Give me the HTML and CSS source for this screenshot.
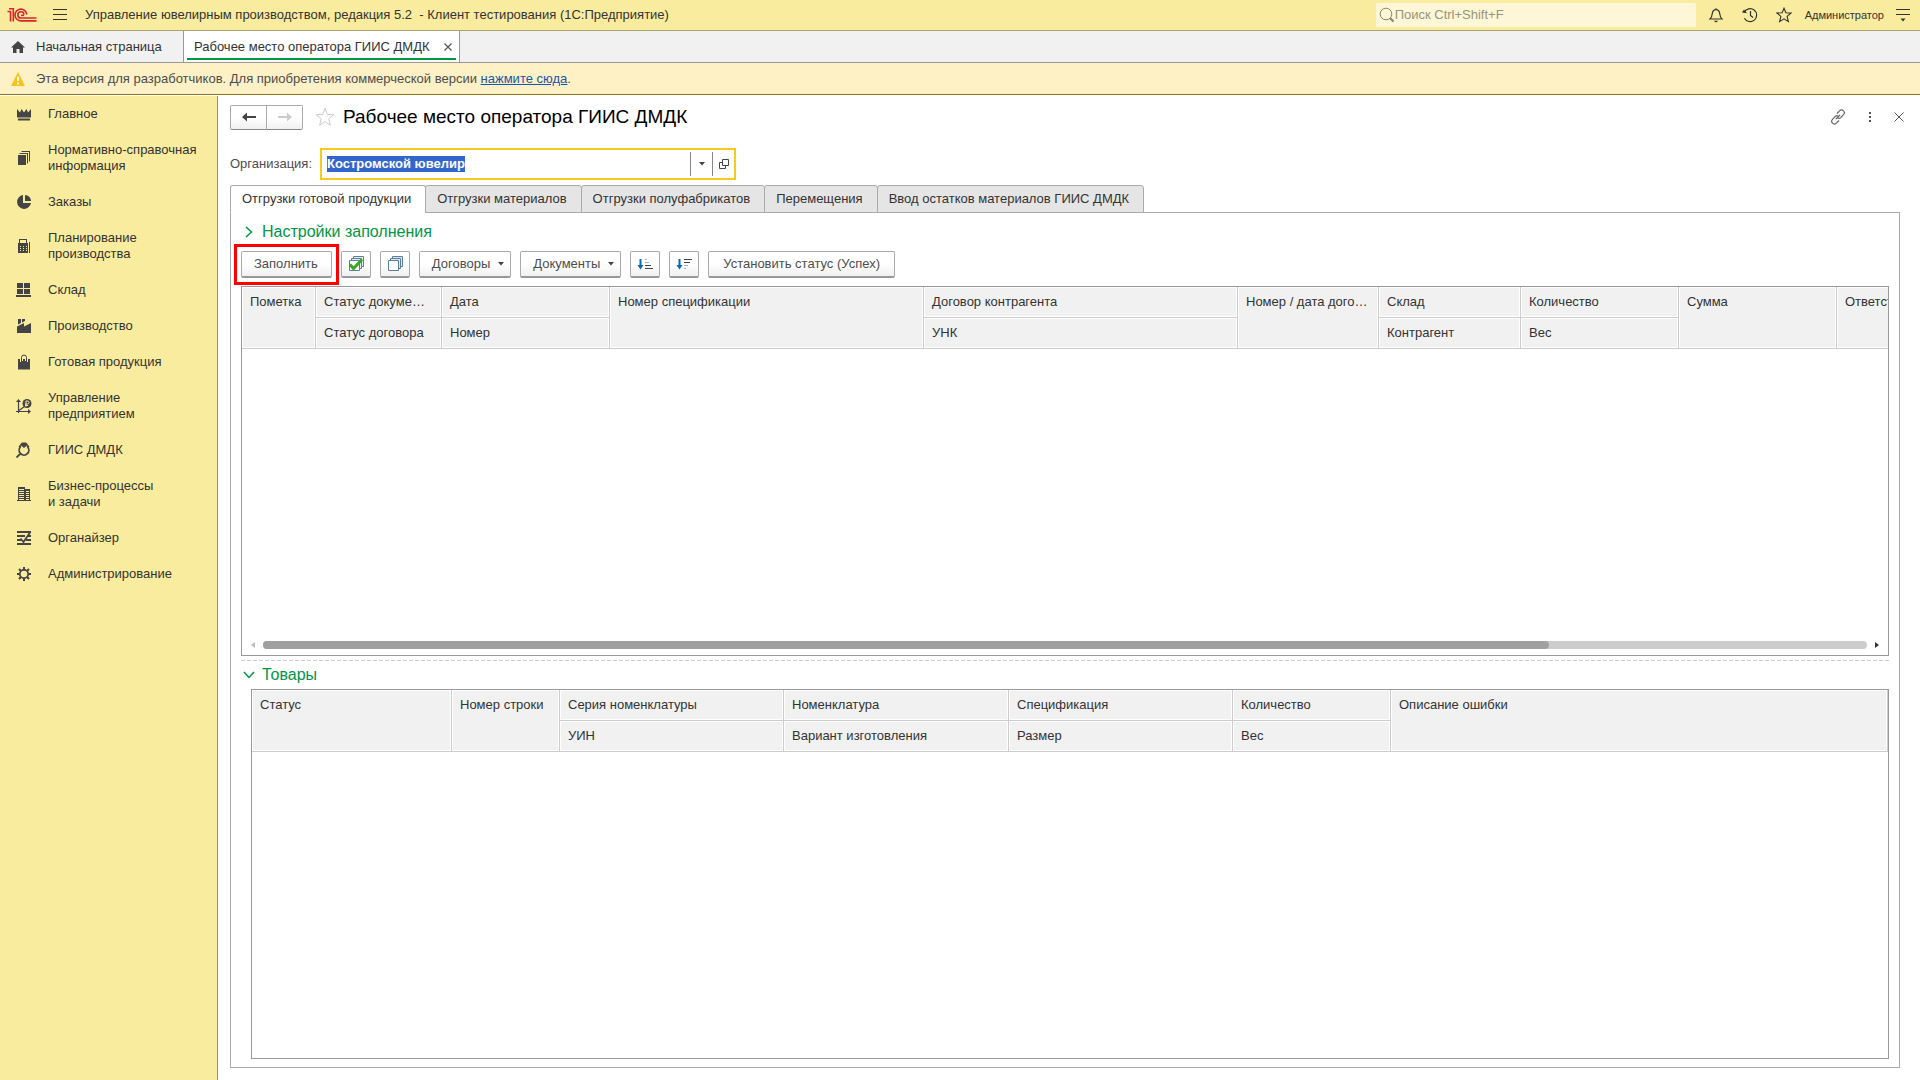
FILE: index.html
```html
<!DOCTYPE html>
<html lang="ru">
<head>
<meta charset="utf-8">
<title>Рабочее место оператора ГИИС ДМДК</title>
<link rel="stylesheet" href="styles.css">
</head>
<body>
<div class="app">
  <header class="topbar">
    <svg class="logo" width="30" height="16" viewBox="0 0 30 16" fill="none" stroke="#d9252b" stroke-width="1.6" aria-label="1С">
      <path d="M0.5 4.5h3v10M2 1.800h4.300v12.700"/>
      <path d="M19.800 7.500A5.900 5.900 0 1 0 14 13.900h15.500"/>
      <path d="M17 7.500A3.100 3.100 0 1 0 14 11h15.500"/>
      <path d="M14 8.300h3"/>
    </svg>
    <button class="icon-btn menu-btn" aria-label="Меню"><svg width="14" height="12" viewBox="0 0 14 12" stroke="#333" fill="none"><path d="M0 .5h14M0 5.500h14M0 10.500h14"/></svg></button>
    <span class="app-title">Управление ювелирным производством, редакция 5.2 &nbsp;- Клиент тестирования (1С:Предприятие)</span>
    <label class="search">
      <svg width="16" height="16" viewBox="0 0 16 16" fill="none" stroke="#8d886a"><circle cx="7" cy="7" r="5.800"/><path d="M11 11l3.500 3.500" stroke-width="2.200"/></svg>
      <input type="text" placeholder="Поиск Ctrl+Shift+F" aria-label="Поиск">
    </label>
    <button class="icon-btn" aria-label="Уведомления"><svg width="16" height="16" viewBox="0 0 16 16" fill="none" stroke="#333" stroke-width="1.200"><path d="M8 1.200v1.300M2 12h12c-1.600-1.600-2-3-2.200-5C11.500 4 10 2.600 8 2.600S4.500 4 4.200 7C4 9 3.600 10.400 2 12z"/><path d="M5.500 13.800h5L8 15.600z" fill="#333" stroke="none"/></svg></button>
    <button class="icon-btn" aria-label="История"><svg width="16" height="16" viewBox="0 0 16 16" fill="none" stroke="#333" stroke-width="1.200"><path d="M2.300 5.300A6.500 6.500 0 1 1 2.400 11.200M8.500 4v4.500l2.500 2"/><path d="M0 5.500l5 .8L2 2.500z" fill="#333" stroke="none"/></svg></button>
    <button class="icon-btn" aria-label="Избранное"><svg width="16" height="16" viewBox="0 0 16 16" fill="none" stroke="#333" stroke-width="1.100"><path d="M8 1.200l1.900 4.600 5.100.3-3.900 3.300 1.300 5.200L8 11.800l-4.400 2.800 1.300-5.200L1 6.100l5.100-.3z"/></svg></button>
    <button class="user">Администратор</button>
    <button class="icon-btn" aria-label="Настройки"><svg width="14" height="14" viewBox="0 0 14 14" stroke="#333" fill="none"><path d="M0 1.500h14M0 6.500h14"/><path d="M4.500 10.500h5L7 13.500z" fill="#333" stroke="none"/></svg></button>
  </header>

  <nav class="windows">
    <a class="home" href="#"><svg width="14" height="12" viewBox="0 0 14 12" fill="#444"><path d="M7 0l7 6.500h-2V12H8.500V8h-3v4H2V6.500H0z"/></svg>Начальная страница</a>
    <div class="window-tab"><a href="#">Рабочее место оператора ГИИС ДМДК</a><button class="icon-btn" aria-label="Закрыть вкладку"><svg width="8" height="8" viewBox="0 0 8 8" stroke="#555" fill="none" stroke-width="1.200"><path d="M.5.5l7 7M7.500.5l-7 7"/></svg></button></div>
  </nav>

  <div class="notice">
    <svg width="14" height="14" viewBox="0 0 14 14"><path d="M7 0l7 14H0z" fill="#f7c31b"/><path d="M7 4.500v4.500M7 10.500v2" stroke="#fff" stroke-width="1.800"/></svg>
    <span>Эта версия для разработчиков. Для приобретения коммерческой версии <a href="#">нажмите сюда</a>.</span>
  </div>

  <div class="body">
    <nav class="sidebar">
      <a href="#"><svg viewBox="0 0 16 16"><path d="M1 3l3 3.500L5.500 3 8 6.500 10.500 3 12 6.500 15 3v8.500H1zM2 12.500h12v2H2z"/></svg>Главное</a>
      <a href="#"><svg viewBox="0 0 16 16"><path d="M2 5h8v10H2zM3.500 3h8.500v10.500h-1V4H3.500zM5.500 1H14v10.500h-1V2H5.500z"/></svg>Нормативно-справочная<br>информация</a>
      <a href="#"><svg viewBox="0 0 16 16"><path d="M7 1v8h8A7 7 0 1 1 7 1z"/><path d="M9 1a6 6 0 0 1 6 6H9z"/></svg>Заказы</a>
      <a href="#"><svg viewBox="0 0 16 16"><path fill-rule="evenodd" d="M3 1h8v4h1v10H2V5h1zM4 2v3h6V2zM4 8v1h1V8zm3 0v1h1V8zm3 0v1h1V8zm-6 2v1h1v-1zm3 0v1h1v-1zm3 0v1h1v-1zm-6 2v1h1v-1zm3 0v1h1v-1zm3 0v1h1v-1zM13 4h1v11h-1z"/></svg>Планирование<br>производства</a>
      <a href="#"><svg viewBox="0 0 16 16"><path d="M1 1h6v5H1zM8 1h6v5H8zM1 7h6v5H1zM8 7h6v5H8zM0 13h15v2H0z"/></svg>Склад</a>
      <a href="#"><svg viewBox="0 0 16 16"><path d="M2 1h3v4L2 6.500zM6 1h3v2L6 4.500zM1 8.500L8 5v3.500L15 5v10H1z"/></svg>Производство</a>
      <a href="#"><svg viewBox="0 0 16 16"><path d="M2 5h12v10.500H2z"/><path d="M4.500 5v3M11.500 5v3M6.500 5v2M9.500 5v2" stroke="#faec9e"/><path d="M5.500 7V3.500a2.500 2.500 0 0 1 5 0V7" fill="none" stroke="#444"/></svg>Готовая продукция</a>
      <a href="#"><svg viewBox="0 0 16 16"><path d="M2.500 15V3M0 13.500h13M3 12.500L8.500 8.500" fill="none" stroke="#444" stroke-width="1.200"/><path d="M0 4l2.500-3L5 4zM12 11l3 2.500-3 2.500z"/><circle cx="11" cy="5.500" r="4.500"/><path d="M10 8.500V3h1.500a1.300 1.300 0 0 1 0 3H9M9 7.500h3" fill="none" stroke="#faec9e"/></svg>Управление<br>предприятием</a>
      <a href="#"><svg viewBox="0 0 16 16"><path d="M6 .5h4l2 2L8 6 4 2.500z"/><path d="M4.500 5a4.800 4.800 0 1 0 7 0M4.500 11.500L.5 15.500" fill="none" stroke="#444" stroke-width="1.800"/><path d="M3 5l2-1.500M13 5l-2-1.500" stroke="#444" stroke-width="1.800"/></svg>ГИИС ДМДК</a>
      <a href="#"><svg viewBox="0 0 16 16"><path fill-rule="evenodd" d="M1 15V14h1V1h7v2h5v11h1v1zM3 3v1h5V3zm0 2v1h5V5zm0 2v1h5V7zm0 2v1h5V9zm0 2v1h5v-1zm0 2v1h5v-1zm7-8v1h3V5zm0 2v1h3V7zm0 2v1h3V9zm0 2v1h3v-1zm0 2v1h3v-1z"/></svg>Бизнес-процессы<br>и задачи</a>
      <a href="#"><svg viewBox="0 0 16 16"><path d="M1 2h14M1 6h8M11 6h4M1 10h4M10 10h5M1 14h14" fill="none" stroke="#444" stroke-width="1.800"/><path d="M4.500 8.500L7.500 12 14 2.500" fill="none" stroke="#444" stroke-width="1.800"/></svg>Органайзер</a>
      <a href="#"><svg viewBox="0 0 16 16"><circle cx="8" cy="8" r="4.200" fill="none" stroke="#444" stroke-width="1.800"/><path d="M8 1v3M8 12v3M1 8h3M12 8h3M3 3l2.200 2.200M10.800 10.800L13 13M13 3l-2.200 2.200M5.200 10.800L3 13" stroke="#444" stroke-width="2"/></svg>Администрирование</a>
    </nav>

    <main class="form">
      <div class="form-head">
        <div class="history">
          <button aria-label="Назад"><svg width="14" height="10" viewBox="0 0 14 10"><path d="M0 5l5-4.500V4h9v2H5v3.500z" fill="#444"/></svg></button>
          <button aria-label="Вперед" disabled><svg width="14" height="10" viewBox="0 0 14 10"><path d="M14 5L9 .5V4H0v2h9v3.500z" fill="#ccc"/></svg></button>
        </div>
        <button class="icon-btn fav" aria-label="В избранное"><svg width="20" height="20" viewBox="0 0 20 20" fill="none" stroke="#ccc"><path d="M10 1.200l2.300 6.200 6.500.3-5.100 4.100 1.700 6.400-5.400-3.600-5.400 3.600 1.700-6.400-5.100-4.100 6.500-.3z"/></svg></button>
        <h1>Рабочее место оператора ГИИС ДМДК</h1>
        <div class="form-tools">
          <button class="icon-btn" aria-label="Получить ссылку"><svg width="16" height="16" viewBox="0 0 16 16" fill="none" stroke="#666" stroke-width="1.200"><path d="M7 4.500l2.500-2.700a2.700 2.700 0 0 1 4 0c1.100 1.100 1.100 2.700 0 3.900L10.700 8.600c-.8.800-2 .9-3 .2M9 11.500l-2.500 2.700a2.700 2.700 0 0 1-4 0c-1.100-1.100-1.100-2.700 0-3.900l2.800-2.900c.8-.8 2-.9 3-.2M5.800 10.200l4.400-4.400"/></svg></button>
          <button class="icon-btn" aria-label="Еще"><svg width="16" height="16" viewBox="0 0 16 16" fill="#555"><path d="M7 3h2v2H7zM7 7h2v2H7zM7 11h2v2H7z"/></svg></button>
          <button class="icon-btn" aria-label="Закрыть"><svg width="10" height="10" viewBox="0 0 10 10" stroke="#555" fill="none"><path d="M.5.5l9 9M9.500.5l-9 9"/></svg></button>
        </div>
      </div>

      <div class="org">
        <label for="org">Организация:</label>
        <div class="org-field">
          <input id="org" type="text" value="Костромской ювелир" autocomplete="off" spellcheck="false">
          <button aria-label="Выбрать"><svg width="6" height="4" viewBox="0 0 6 4" fill="#444"><path d="M0 0h6L3 3.500z"/></svg></button>
          <button aria-label="Открыть"><svg width="10" height="10" viewBox="0 0 10 10" fill="none" stroke="#444"><path d="M3.500.5h6v6h-6zM3 3.500H.5v6h6V7"/></svg></button>
        </div>
      </div>

      <div class="tabs" role="tablist">
        <button role="tab" aria-selected="true">Отгрузки готовой продукции</button>
        <button role="tab">Отгрузки материалов</button>
        <button role="tab">Отгрузки полуфабрикатов</button>
        <button role="tab">Перемещения</button>
        <button role="tab">Ввод остатков материалов ГИИС ДМДК</button>
      </div>

      <section class="panel">
        <h2><svg width="10" height="12" viewBox="0 0 10 12" fill="none" stroke="#009646" stroke-width="1.500"><path d="M2 1l5.500 5L2 11"/></svg>Настройки заполнения</h2>

        <div class="toolbar">
          <div class="marked"><button class="btn">Заполнить</button></div>
          <button class="btn square" aria-label="Установить пометки"><svg width="16" height="16" viewBox="0 0 16 16"><g fill="#e8f0f5" stroke="#5b7f99"><path d="M5.500.5h10v10h-10z"/><path d="M3.500 2.500h10v10h-10z"/><path d="M1.500 4.500h10v10h-10z" fill="#fff"/></g><path d="M2 8.500l3.500 4L14 3.500" fill="none" stroke="#38a81c" stroke-width="3"/></svg></button>
          <button class="btn square" aria-label="Снять пометки"><svg width="16" height="16" viewBox="0 0 16 16" fill="#dfe8ee" stroke="#5b7f99"><path d="M5.500.5h10v10h-10z"/><path d="M3.500 2.500h10v10h-10z"/><path d="M1.500 4.500h10v10h-10z" fill="#fff"/></svg></button>
          <button class="btn drop">Договоры<svg width="6" height="4" viewBox="0 0 6 4" fill="#444"><path d="M0 0h6L3 3.500z"/></svg></button>
          <button class="btn drop">Документы<svg width="6" height="4" viewBox="0 0 6 4" fill="#444"><path d="M0 0h6L3 3.500z"/></svg></button>
          <button class="btn square" aria-label="По возрастанию"><svg width="16" height="12" viewBox="0 0 16 12"><path d="M3.500 1v7" stroke="#0d68b0" stroke-width="2"/><path d="M.5 7h6l-3 4.500z" fill="#0d68b0"/><path d="M8 1.500h2M8 4.500h4" stroke="#aaa"/><path d="M8 7.500h6M8 10.500h8" stroke="#444"/></svg></button>
          <button class="btn square" aria-label="По убыванию"><svg width="16" height="12" viewBox="0 0 16 12"><path d="M3.500 1v7" stroke="#0d68b0" stroke-width="2"/><path d="M.5 7h6l-3 4.500z" fill="#0d68b0"/><path d="M8 1.500h8M8 4.500h6" stroke="#444"/><path d="M8 7.500h4M8 10.500h2" stroke="#aaa"/></svg></button>
          <button class="btn wide">Установить статус (Успех)</button>
        </div>

        <div class="grid">
          <div class="grid-view">
            <table class="docs">
              <colgroup><col class="w74"><col class="w126"><col class="w168"><col class="w314"><col class="w314"><col class="w141"><col class="w142"><col class="w158"><col class="w158"><col></colgroup>
              <thead>
                <tr><th rowspan="2">Пометка</th><th>Статус докуме…</th><th>Дата</th><th rowspan="2">Номер спецификации</th><th>Договор контрагента</th><th rowspan="2">Номер / дата дого…</th><th>Склад</th><th>Количество</th><th rowspan="2">Сумма</th><th rowspan="2">Ответственный</th></tr>
                <tr><th>Статус договора</th><th>Номер</th><th>УНК</th><th>Контрагент</th><th>Вес</th></tr>
              </thead>
              <tbody></tbody>
            </table>
          </div>
          <div class="scroll">
            <button class="icon-btn" aria-label="Влево"><svg width="4" height="6" viewBox="0 0 4 6" fill="#bbb"><path d="M4 0v6L0 3z"/></svg></button>
            <div class="track"><div class="thumb" style="width: 80.2%"></div></div>
            <button class="icon-btn" aria-label="Вправо"><svg width="4" height="6" viewBox="0 0 4 6" fill="#333"><path d="M0 0v6l4-3z"/></svg></button>
          </div>
        </div>

        <div class="splitter"></div>

        <h2><svg width="12" height="10" viewBox="0 0 12 10" fill="none" stroke="#009646" stroke-width="1.500"><path d="M1 2l5 5.500L11 2"/></svg>Товары</h2>

        <div class="grid goods-grid">
          <div class="grid-view">
            <table class="goods">
              <colgroup><col class="w200"><col class="w108"><col class="w224"><col class="w225"><col class="w224"><col class="w158"><col></colgroup>
              <thead>
                <tr><th rowspan="2">Статус</th><th rowspan="2">Номер строки</th><th>Серия номенклатуры</th><th>Номенклатура</th><th>Спецификация</th><th>Количество</th><th rowspan="2">Описание ошибки</th></tr>
                <tr><th>УИН</th><th>Вариант изготовления</th><th>Размер</th><th>Вес</th></tr>
              </thead>
              <tbody></tbody>
            </table>
          </div>
        </div>
      </section>
    </main>
  </div>
</div>
<script src="app.js"></script>
</body>
</html>
```
FILE: styles.css
```css
* { box-sizing: border-box; }

body {
  margin: 0;
  background: #fff;
  color: #333;
  font: 13px/16px "Liberation Sans", Arial, sans-serif;
}

button, input { font: inherit; color: inherit; }
button { padding: 0; }
a { color: inherit; text-decoration: none; }
svg { display: block; flex: none; }

.app { display: flex; flex-direction: column; min-height: 100vh; }

.icon-btn {
  display: flex;
  align-items: center;
  justify-content: center;
  border: 0;
  background: none;
}

/* Top bar */
.topbar {
  display: flex;
  align-items: center;
  height: 31px;
  padding: 0 10px 0 7px;
  background: #faec9e;
  border-bottom: 1px solid #aaa36b;
}
.menu-btn { margin: 0 18px 0 16px; }
.app-title { flex: 1; white-space: nowrap; }
.search {
  display: flex;
  align-items: center;
  width: 320px;
  height: 24px;
  margin-right: 12px;
  padding-left: 3px;
  background: #fdf7d7;
  border-radius: 2px;
}
.search input {
  flex: 1;
  min-width: 0;
  border: 0;
  padding: 0;
  background: none;
  outline: 0;
}
.search input::placeholder { color: #99947a; opacity: 1; }
.topbar > .search ~ .icon-btn { margin-right: 18px; }
.user { margin: 0 12px 0 -5px; border: 0; background: none; font-size: 11px; }
.topbar > .user ~ .icon-btn { margin-right: 0; }

/* Open windows */
.windows {
  display: flex;
  height: 32px;
  background: #f1f1f1;
  border-bottom: 1px solid #999;
}
.home { display: flex; align-items: center; gap: 11px; width: 183px; padding-left: 11px; }
.window-tab {
  display: flex;
  align-items: center;
  gap: 14px;
  padding: 0 7px 0 10px;
  background: linear-gradient(#009646, #009646) 3px 27px / calc(100% - 6px) 2px no-repeat #fff;
  border: solid #999;
  border-width: 0 1px;
}

/* Developer notice */
.notice {
  display: flex;
  align-items: center;
  gap: 11px;
  height: 32px;
  padding-left: 11px;
  background: #fdf1c5;
  border-bottom: 1px solid #94791a;
  color: #4d4d4d;
}
.notice a { color: #1c55ae; text-decoration: underline; }

.body { display: flex; flex: 1; padding-top: 1px; }

/* Sections */
.sidebar {
  flex: none;
  width: 218px;
  background: #faec9e;
  border-right: 1px solid #94906b;
}
.sidebar a { display: flex; align-items: center; gap: 16px; padding: 10px 0 10px 16px; }
.sidebar svg { width: 16px; height: 16px; fill: #444; }

/* Form */
.form {
  display: flex;
  flex: 1;
  flex-direction: column;
  min-width: 0;
  padding: 8px 20px 12px 12px;
}
.form-head { display: flex; align-items: center; height: 26px; }
.history { display: flex; }
.history button {
  display: flex;
  align-items: center;
  justify-content: center;
  width: 37px;
  height: 25px;
  background: linear-gradient(#fff 50%, #f0f0f0);
  border: 1px solid #aaa;
  border-bottom-color: #888;
  border-radius: 2px 0 0 2px;
}
.history button + button { margin-left: -1px; border-radius: 0 2px 2px 0; }
.fav { margin: 0 8px 0 12px; }
h1 { flex: 1; margin: 0; font-size: 19px; line-height: 24px; font-weight: 400; color: #000; }
.form-tools { display: flex; gap: 16px; margin-right: -4px; }

.org { display: flex; align-items: center; gap: 8px; margin-top: 18px; color: #4d4d4d; }
.org-field {
  display: flex;
  align-items: center;
  width: 416px;
  height: 32px;
  border: 2px solid #f8c91f;
  background: #fff;
}
.org-field input {
  flex: 1;
  min-width: 0;
  padding: 0 0 0 5px;
  border: 0;
  outline: 0;
  background: none;
  color: #333;
  font-weight: 700;
}
.org-field input::selection { background: #3366cc; color: #fff; }
.org-field button {
  display: flex;
  align-items: center;
  justify-content: center;
  width: 22px;
  height: 24px;
  border: 0;
  border-left: 1px solid #888;
  background: none;
}

.tabs { display: flex; margin: 5px 0 -1px; z-index: 1; }
.tabs button {
  height: 28px;
  padding: 0 14px 0 11px;
  border: 1px solid #aaa;
  border-radius: 3px 3px 0 0;
  background: #e5e5e5;
}
.tabs button + button { margin-left: -1px; }
.tabs [aria-selected="true"] { background: #fff; border-bottom-color: #fff; }

.panel {
  display: flex;
  flex: 1;
  flex-direction: column;
  min-width: 0;
  padding: 8px 10px;
  border: 1px solid #aaa;
}
h2 {
  display: flex;
  align-items: center;
  margin: 0;
  padding-left: 2px;
  font-size: 16px;
  line-height: 22px;
  font-weight: 400;
  color: #009646;
}
h2 svg { width: 12px; margin-right: 7px; }

.toolbar { display: flex; align-items: center; gap: 9px; height: 43px; }
.btn {
  height: 27px;
  padding: 0 13px 0 12px;
  background: linear-gradient(#fff 50%, #f0f0f0);
  border: 1px solid #aaa;
  border-bottom: 2px solid #999;
  border-radius: 2px;
  color: #4d4d4d;
}
.square { display: flex; align-items: center; justify-content: center; width: 30px; padding: 0; }
.drop { display: flex; align-items: center; gap: 8px; padding-right: 6px; }
.wide { padding: 0 14px; }
.marked {
  margin: 0 -7px 0 -7px;
  padding: 4px;
  border: 3px solid #f00;
}

.grid {
  display: flex;
  flex: 1 1 0;
  flex-direction: column;
  min-height: 140px;
  border: 1px solid #999;
}
.goods-grid { margin-left: 10px; }
.grid-view { flex: 1; overflow: hidden; }
table { border-spacing: 0; table-layout: fixed; }
.docs { width: 2058px; }
.goods { width: 100%; }
th {
  height: 31px;
  padding: 0 8px;
  overflow: hidden;
  text-align: left;
  text-overflow: ellipsis;
  white-space: nowrap;
  font-weight: 400;
  background: #f1f1f1;
  border: solid #ccc;
  border-width: 0 1px 1px 0;
  box-shadow: inset 0 0 0 1px #fff;
}
th[rowspan] { padding-top: 7px; vertical-align: top; }
.w74 { width: 74px; }
.w108 { width: 108px; }
.w126 { width: 126px; }
.w141 { width: 141px; }
.w142 { width: 142px; }
.w158 { width: 158px; }
.w168 { width: 168px; }
.w200 { width: 200px; }
.w224 { width: 224px; }
.w225 { width: 225px; }
.w314 { width: 314px; }

.scroll { display: flex; align-items: center; gap: 8px; height: 20px; padding: 0 9px; }
.track { flex: 1; height: 8px; border-radius: 4px; background: #ccc; }
.thumb { height: 8px; border-radius: 4px; background: #a0a0a0; }
.splitter { height: 1px; margin: 4px 0 3px; background: repeating-linear-gradient(90deg, #ccc 0 4px, #fff 4px 6px); }
.splitter + h2 { margin-bottom: 3px; }
```
FILE: app.js
```js
// The organisation is ready to be retyped as soon as the form opens.
const org = document.getElementById("org");
org.focus();
org.select();
```
